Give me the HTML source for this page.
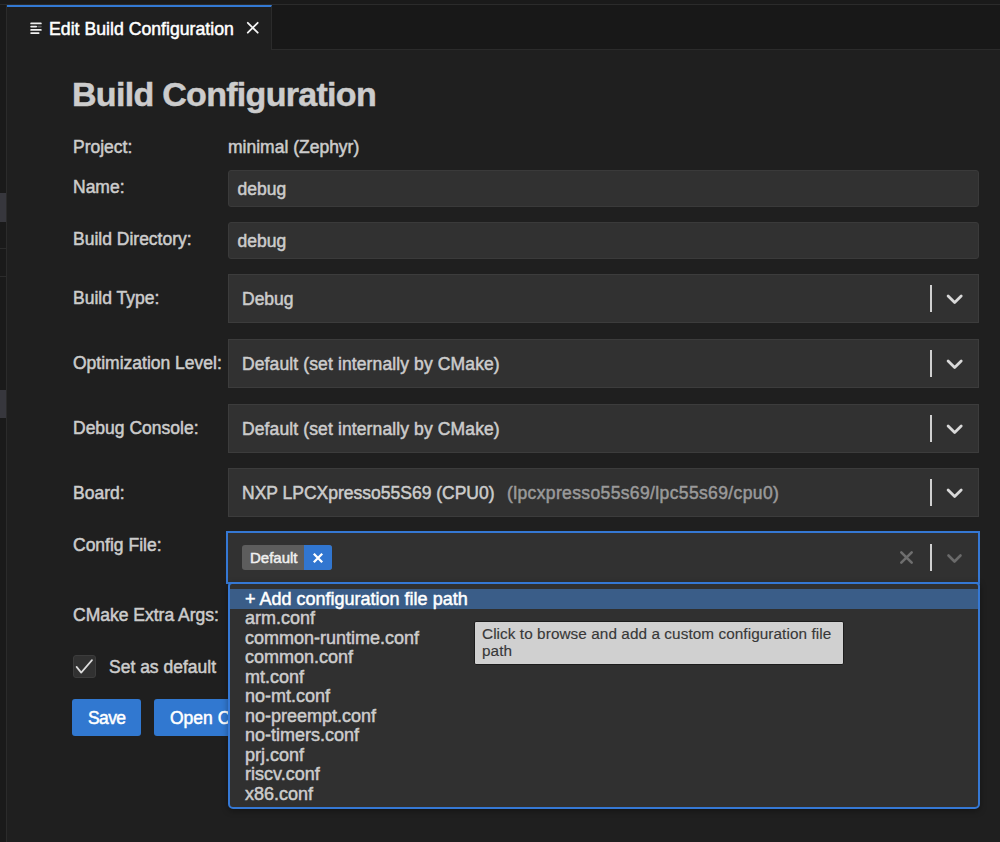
<!DOCTYPE html>
<html><head><meta charset="utf-8">
<style>
*{box-sizing:border-box;margin:0;padding:0}
html,body{width:1000px;height:842px;overflow:hidden;background:#1f1f1f;font-family:"Liberation Sans",sans-serif;color:#cccccc;-webkit-text-stroke:0.5px currentColor}
.abs{position:absolute}
.t{position:absolute;white-space:nowrap;line-height:1}
#topstrip{left:0;top:0;width:1000px;height:5px;background:#1a1a1a;border-bottom:1px solid #2b2b2b}
#tabbar{left:0;top:5px;width:1000px;height:45px;background:#181818;border-bottom:1px solid #2b2b2b}
#leftstrip{left:0;top:5px;width:7px;height:837px;background:#1a1a1a;border-right:1px solid #2b2b2b}
#tab{left:7px;top:5px;width:265px;height:45px;background:#1f1f1f;border-right:1px solid #2b2b2b;border-top:2px solid #3379d3}
.lbl{font-size:17.5px;color:#cccccc}
.inp{position:absolute;left:228px;width:751px;background:#313131;border:1px solid #3a3a3a;border-radius:3px}
.dd{position:absolute;left:228px;width:751px;height:49px;background:#313131;border:1px solid #3c3c3c}
.sep{position:absolute;left:701px;top:10.3px;width:2.2px;height:27px;background:#d0d0d0}
.chev{position:absolute;left:717px;top:18px}
</style></head><body>
<div id="topstrip" class="abs"></div>
<div id="tabbar" class="abs"></div>
<div id="leftstrip" class="abs"></div>
<div class="abs" style="left:0;top:193px;width:6px;height:29px;background:#37373d"></div>
<div class="abs" style="left:0;top:248px;width:6px;height:1px;background:#2b2b2b"></div>
<div class="abs" style="left:0;top:276px;width:6px;height:1px;background:#2b2b2b"></div>
<div class="abs" style="left:0;top:390px;width:6px;height:28px;background:#37373d"></div>
<div id="tab" class="abs"></div>
<svg class="abs" style="left:29px;top:20.5px" width="14" height="14" viewBox="0 0 14 14">
<g stroke="#f0f0f0" stroke-width="1.7" stroke-linecap="round"><path d="M2.1 2.4H11.9M2.1 5.6H7.2M2.1 8.9H11.9M2.1 12.1H9.7"/><path d="M9 5.6H11.9" stroke-opacity=".3"/></g>
</svg>
<div class="t" style="left:49px;top:21px;font-size:17.7px;color:#ffffff">Edit Build Configuration</div>
<svg class="abs" style="left:246px;top:21px" width="14" height="14" viewBox="0 0 14 14"><path d="M1.8 1.8L11.7 11.7M11.7 1.8L1.8 11.7" stroke="#f4f4f4" stroke-width="1.8" stroke-linecap="round"/></svg>

<div class="t" style="left:72px;top:76.5px;font-size:34px;letter-spacing:-0.7px;font-weight:700;color:#cccccc">Build Configuration</div>

<div class="t lbl" style="left:73px;top:139px">Project:</div>
<div class="t lbl" style="left:228px;top:139px">minimal (Zephyr)</div>

<div class="t lbl" style="left:73px;top:179px">Name:</div>
<div class="inp" style="top:170px;height:37px"><div class="t lbl" style="left:8.5px;top:10px">debug</div></div>

<div class="t lbl" style="left:73px;top:231px">Build Directory:</div>
<div class="inp" style="top:222px;height:37px"><div class="t lbl" style="left:8.5px;top:10px">debug</div></div>

<div class="t lbl" style="left:73px;top:290px">Build Type:</div>
<div class="dd" style="top:274px"><div class="t lbl" style="left:13px;top:16px">Debug</div><div class="sep"></div><svg class="chev" width="18" height="12" viewBox="0 0 18 12"><path d="M2.1 3.1L8.65 9.5L15.2 3.1" fill="none" stroke="#d8d8d8" stroke-width="2.8" stroke-linecap="round" stroke-linejoin="round"/></svg></div>

<div class="t lbl" style="left:73px;top:355px">Optimization Level:</div>
<div class="dd" style="top:339px"><div class="t lbl" style="left:13px;top:16px;letter-spacing:0.12px">Default (set internally by CMake)</div><div class="sep"></div><svg class="chev" width="18" height="12" viewBox="0 0 18 12"><path d="M2.1 3.1L8.65 9.5L15.2 3.1" fill="none" stroke="#d8d8d8" stroke-width="2.8" stroke-linecap="round" stroke-linejoin="round"/></svg></div>

<div class="t lbl" style="left:73px;top:420px">Debug Console:</div>
<div class="dd" style="top:404px"><div class="t lbl" style="left:13px;top:16px;letter-spacing:0.12px">Default (set internally by CMake)</div><div class="sep"></div><svg class="chev" width="18" height="12" viewBox="0 0 18 12"><path d="M2.1 3.1L8.65 9.5L15.2 3.1" fill="none" stroke="#d8d8d8" stroke-width="2.8" stroke-linecap="round" stroke-linejoin="round"/></svg></div>

<div class="t lbl" style="left:73px;top:485px">Board:</div>
<div class="dd" style="top:468px"><div class="t lbl" style="left:13px;top:16px">NXP LPCXpresso55S69 (CPU0)</div><div class="t lbl" style="left:278px;top:16px;color:#9a9a9a;letter-spacing:0.37px">(lpcxpresso55s69/lpc55s69/cpu0)</div><div class="sep"></div><svg class="chev" width="18" height="12" viewBox="0 0 18 12"><path d="M2.1 3.1L8.65 9.5L15.2 3.1" fill="none" stroke="#d8d8d8" stroke-width="2.8" stroke-linecap="round" stroke-linejoin="round"/></svg></div>

<div class="t lbl" style="left:73px;top:537px">Config File:</div>

<div class="t lbl" style="left:73px;top:607px">CMake Extra Args:</div>

<div class="abs" style="left:72.5px;top:655px;width:23.5px;height:23px;background:#313131;border:1px solid #3c3c3c;border-radius:3px"></div>
<svg class="abs" style="left:72px;top:655px" width="24" height="23" viewBox="0 0 24 23"><path d="M4.6 11.9L9.2 17.6L20 5.1" fill="none" stroke="#dcdcdc" stroke-width="1.7" stroke-linecap="round" stroke-linejoin="round"/></svg>
<div class="t lbl" style="left:109px;top:658.5px">Set as default</div>

<div class="abs" style="left:72px;top:699px;width:69px;height:37px;background:#3178d0;border-radius:3px"><div class="t lbl" style="left:16px;top:11px;color:#fff;letter-spacing:-0.6px">Save</div></div>
<div class="abs" style="left:154px;top:699px;width:200px;height:37px;background:#3178d0;border-radius:3px"><div class="t lbl" style="left:16px;top:11px;color:#fff">Open Configuration</div></div>


<div class="abs" style="left:226px;top:531px;width:754px;height:53px;background:#313131;border:2px solid #3578d4"></div>
<div class="abs" style="left:242px;top:545px;width:90px;height:25px;background:#5d5d5d;border-radius:3px;overflow:hidden"><div class="t" style="left:8px;top:5px;font-size:15px;color:#f0f0f0">Default</div><div class="abs" style="left:61.5px;top:0;width:29px;height:25px;background:#3176d0"></div><svg class="abs" style="left:69.5px;top:6.5px" width="12" height="12" viewBox="0 0 12 12"><path d="M1.8 1.8L10.2 10.2M10.2 1.8L1.8 10.2" stroke="#fff" stroke-width="2.3"/></svg></div>
<svg class="abs" style="left:899px;top:550px" width="15" height="15" viewBox="0 0 15 15"><path d="M2.3 2.3L12.7 12.7M12.7 2.3L2.3 12.7" stroke="#6e6e6e" stroke-width="2.6" stroke-linecap="round"/></svg>
<div class="abs" style="left:930px;top:544px;width:2px;height:27px;background:#d0d0d0"></div>
<svg class="abs" style="left:945.5px;top:551.5px" width="18" height="12" viewBox="0 0 18 12"><path d="M2.5 3.5L8.5 9.5L14.5 3.5" fill="none" stroke="#6a6a6a" stroke-width="2.6" stroke-linecap="round" stroke-linejoin="round"/></svg>

<div class="abs" style="left:228px;top:582px;width:752px;height:227px;background:#303030;border:2px solid #3578d4;border-radius:4px 4px 5px 5px;box-shadow:0 2px 6px rgba(0,0,0,.35)"></div>
<div class="abs" style="left:230px;top:589px;width:748px;height:19.5px;background:#3a5d88"></div>
<div class="abs" style="left:245px;top:589.7px;font-size:18px;line-height:19.5px;white-space:nowrap;color:#cccccc">
<div style="color:#ffffff">+ Add configuration file path</div>
<div>arm.conf</div><div>common-runtime.conf</div><div>common.conf</div><div>mt.conf</div><div>no-mt.conf</div><div>no-preempt.conf</div><div>no-timers.conf</div><div>prj.conf</div><div>riscv.conf</div><div>x86.conf</div>
</div>
<div class="abs" style="left:473.5px;top:620.8px;width:370.5px;height:44.4px;border-radius:2px;background:#d0d0d0;border:1px solid #1c1c1c"></div>
<div class="abs" style="left:482px;top:625px;width:355px;font-size:15.3px;line-height:17.3px;color:#383838;-webkit-text-stroke:0.15px #383838;letter-spacing:0.08px">Click to browse and add a custom configuration file path</div>
</body></html>
